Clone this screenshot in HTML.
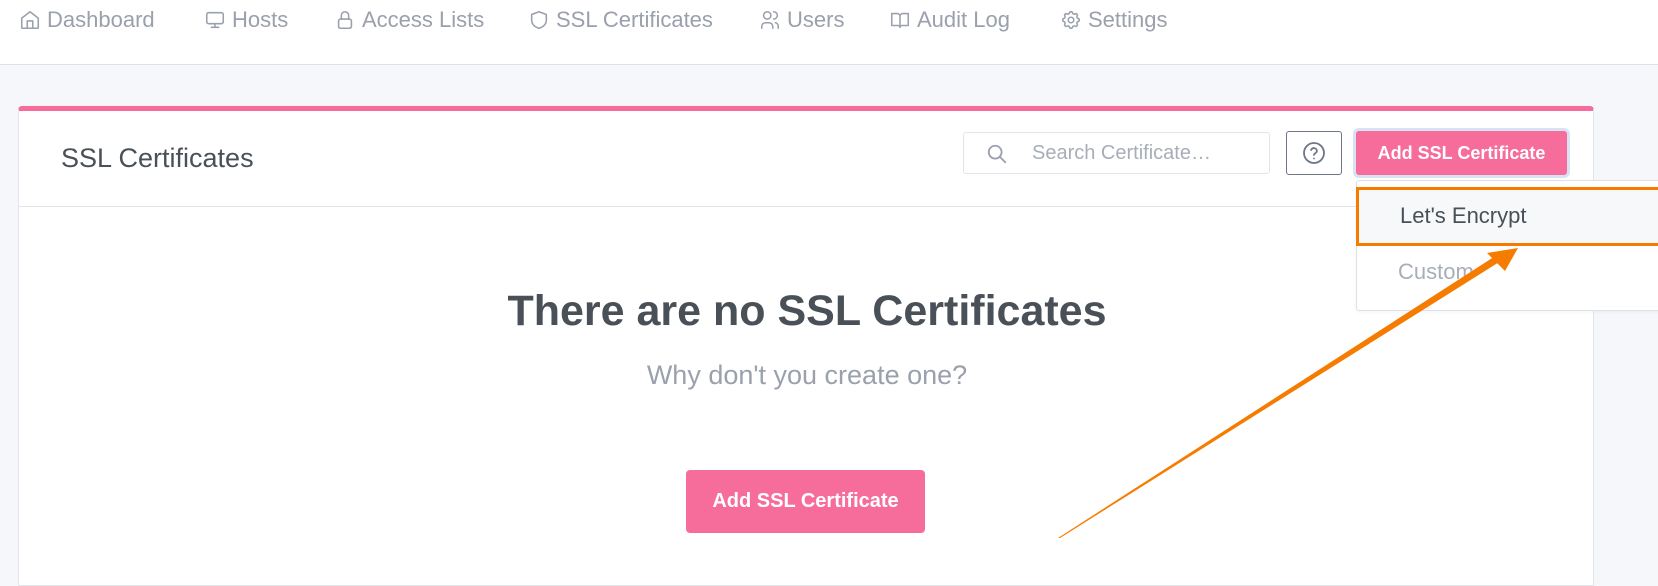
<!DOCTYPE html>
<html><head><meta charset="utf-8"><style>
*{box-sizing:border-box;margin:0;padding:0}
body{width:1658px;height:570px;overflow:hidden;background:#f5f7fb;font-family:"Liberation Sans",sans-serif;position:relative}
.top{position:absolute;left:0;top:0;width:1658px;height:65px;background:#fff;border-bottom:1px solid #dde2ea}
.nav{position:absolute;top:7px;font-size:22px;color:#9aa0ac;display:flex;align-items:center;gap:6px;white-space:nowrap}
.nav svg{width:22px;height:22px;flex:none;stroke:#9aa0ac;fill:none;stroke-width:1.7;stroke-linecap:round;stroke-linejoin:round}
.card{position:absolute;left:18px;top:106px;width:1576px;height:480px;background:#fff;border:1px solid #e0e5ec;border-top:5px solid #f66d9b;border-radius:4px 4px 0 0}
.hdr{position:absolute;left:0;top:0;width:100%;height:96px;border-bottom:1px solid #e0e5ec}
.title{position:absolute;left:42px;top:32px;font-size:27px;color:#495057}
.search{position:absolute;left:944px;top:21px;width:307px;height:42px;border:1px solid #e0e5ec;border-radius:3px;font-size:20px;color:#a8aeb7;padding:9px 0 0 68px}
.search svg{position:absolute;left:22px;top:10px}
.help{position:absolute;left:1267px;top:20px;width:56px;height:44px;border:1.5px solid #6e7687;border-radius:3px}
.help svg{position:absolute;left:15px;top:9px}
.add{position:absolute;left:1337px;top:20px;width:211px;height:44px;background:#f66d9b;border-radius:3px;color:#fff;font-weight:bold;font-size:18px;text-align:center;line-height:44px;box-shadow:0 0 0 3px #d7e3f4;white-space:nowrap}
.dd{position:absolute;left:1356px;top:180px;width:320px;height:131px;background:#fff;border:1px solid #dde2ea;border-radius:3px;box-shadow:0 1px 3px rgba(0,0,0,.05)}
.le{position:absolute;left:1356px;top:187px;width:310px;height:59px;background:#f7f8fa;border:3px solid #f57c00;font-size:22px;color:#495057;padding:13px 0 0 41px}
.cu{position:absolute;left:1398px;top:259px;font-size:22px;color:#a8aeb7}
h1{position:absolute;left:0;width:1576px;text-align:center;top:176px;font-size:43px;font-weight:bold;color:#495057}
.sub{position:absolute;left:0;width:1576px;text-align:center;top:249px;font-size:27px;color:#9aa0ac}
.btn{position:absolute;left:667px;top:359px;width:239px;height:63px;background:#f66d9b;border-radius:4px;color:#fff;font-weight:bold;font-size:20px;text-align:center;line-height:63px}
</style></head><body>
<div class="top">
<div class="nav" style="left:19px"><svg viewBox="0 0 24 24"><path d="M3 10l9-7 9 7v10a1 1 0 0 1-1 1H4a1 1 0 0 1-1-1z"/><path d="M9 21v-8h6v8"/></svg>Dashboard</div>
<div class="nav" style="left:204px"><svg viewBox="0 0 24 24"><rect x="3" y="4" width="18" height="12" rx="2"/><path d="M8 20h8M12 16v4"/></svg>Hosts</div>
<div class="nav" style="left:334px"><svg viewBox="0 0 24 24"><rect x="5" y="11" width="14" height="10" rx="2"/><path d="M8 11V7a4 4 0 0 1 8 0v4"/></svg>Access Lists</div>
<div class="nav" style="left:528px"><svg viewBox="0 0 24 24"><path d="M12 3l8 3v6c0 5-4 8-8 9-4-1-8-4-8-9V6z"/></svg>SSL Certificates</div>
<div class="nav" style="left:759px"><svg viewBox="0 0 24 24"><circle cx="9" cy="7" r="4"/><path d="M3 21v-2a4 4 0 0 1 4-4h4a4 4 0 0 1 4 4v2M16 3a4 4 0 0 1 0 8M21 21v-2a4 4 0 0 0-3-4"/></svg>Users</div>
<div class="nav" style="left:889px"><svg viewBox="0 0 24 24"><path d="M3 5h6a3 3 0 0 1 3 3v12a2 2 0 0 0-2-2H3zM21 5h-6a3 3 0 0 0-3 3v12a2 2 0 0 1 2-2h7z"/></svg>Audit Log</div>
<div class="nav" style="left:1060px"><svg viewBox="0 0 24 24"><circle cx="12" cy="12" r="3"/><path d="M10.3 4.3c.4-1.8 3-1.8 3.4 0a1.7 1.7 0 0 0 2.6 1.1c1.5-.9 3.3.8 2.4 2.4a1.7 1.7 0 0 0 1 2.5c1.8.4 1.8 3 0 3.4a1.7 1.7 0 0 0-1 2.6c.9 1.5-.9 3.3-2.4 2.4a1.7 1.7 0 0 0-2.6 1c-.4 1.8-3 1.8-3.4 0a1.7 1.7 0 0 0-2.6-1c-1.5.9-3.3-.9-2.4-2.4a1.7 1.7 0 0 0-1-2.6c-1.8-.4-1.8-3 0-3.4a1.7 1.7 0 0 0 1-2.5c-.9-1.6.9-3.3 2.4-2.4a1.7 1.7 0 0 0 2.6-1.1z"/></svg>Settings</div>
</div>
<div class="card">
<div class="hdr">
<div class="title">SSL Certificates</div>
<div class="search"><svg width="22" height="22" viewBox="0 0 24 24" fill="none" stroke="#9aa0ac" stroke-width="2" stroke-linecap="round"><circle cx="10" cy="10" r="7"/><path d="M21 21l-6-6"/></svg>Search Certificate…</div>
<div class="help"><svg width="24" height="24" viewBox="0 0 24 24" fill="none" stroke="#6e7687" stroke-width="1.8" stroke-linecap="round"><circle cx="12" cy="12" r="10"/><path d="M9.1 9a3 3 0 0 1 5.8 1c0 2-3 2.5-3 4"/><path d="M12 17.5h.01"/></svg></div>
<div class="add">Add SSL Certificate</div>
</div>
<h1>There are no SSL Certificates</h1>
<div class="sub">Why don't you create one?</div>
<div class="btn">Add SSL Certificate</div>
</div>
<div class="dd"></div>
<div class="le">Let's Encrypt</div>
<div class="cu">Custom</div>
<svg style="position:absolute;left:0;top:0" width="1658" height="570"><polygon points="1058,538 1060,538 1504,259 1500,253" fill="#f57c00"/><polygon points="1518,248 1487,253 1505,271" fill="#f57c00"/></svg>
</body></html>
